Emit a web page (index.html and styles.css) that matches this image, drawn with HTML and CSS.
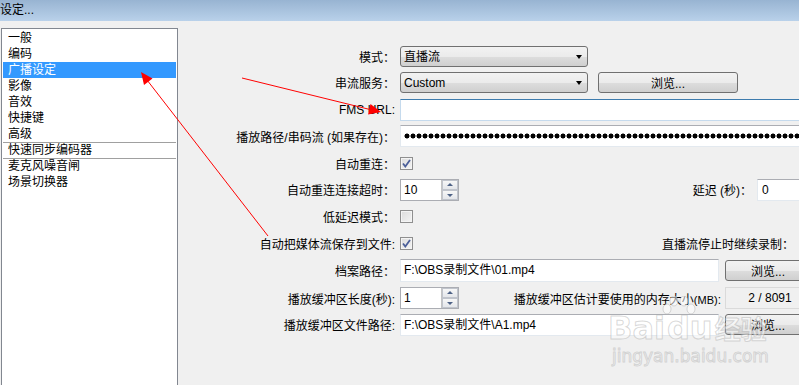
FILE: index.html
```html
<!DOCTYPE html>
<html lang="zh-CN">
<head>
  <meta charset="UTF-8">
  <title>设定...</title>
  <link rel="stylesheet" href="styles.css">
</head>
<body>
  <div class="titlebar">设定...</div>

  <div class="main">
    <ul class="nav">
      <li>一般</li>
      <li>编码</li>
      <li class="active">广播设定</li>
      <li>影像</li>
      <li>音效</li>
      <li>快捷键</li>
      <li>高级</li>
      <li class="sep">快速同步编码器</li>
      <li class="sep">麦克风噪音闸</li>
      <li>场景切换器</li>
    </ul>

    <div class="form">
      <div class="row">
        <span class="label">模式：</span>
        <div class="combo">直播流<i class="caret"></i></div>
      </div>

      <div class="row">
        <span class="label">串流服务：</span>
        <div class="combo">Custom<i class="caret"></i></div>
        <button class="btn btn-wide">浏览...</button>
      </div>

      <div class="row">
        <span class="label">FMS URL:</span>
        <div class="text text-long focus"></div>
      </div>

      <div class="row">
        <span class="label">播放路径/串码流 (如果存在)：</span>
        <div class="text text-long"><span class="dots"></span></div>
      </div>

      <div class="row">
        <span class="label">自动重连：</span>
        <span class="check checked"><svg viewBox="0 0 11 11"><path d="M2 5.5 L4.3 8.5 L9 2"/></svg></span>
      </div>

      <div class="row">
        <span class="label">自动重连连接超时：</span>
        <div class="spin">
          <span class="spin-value">10</span>
          <span class="spin-btns"><b class="up"></b><b class="down"></b></span>
        </div>
        <span class="aux aux-delay">延迟 (秒)：</span>
        <div class="text text-short">0</div>
      </div>

      <div class="row">
        <span class="label">低延迟模式：</span>
        <span class="check"></span>
      </div>

      <div class="row">
        <span class="label">自动把媒体流保存到文件:</span>
        <span class="check checked"><svg viewBox="0 0 11 11"><path d="M2 5.5 L4.3 8.5 L9 2"/></svg></span>
        <span class="aux aux-keep">直播流停止时继续录制：</span>
      </div>

      <div class="row row-tall">
        <span class="label">档案路径：</span>
        <div class="text text-path">F:\OBS录制文件\01.mp4</div>
        <button class="btn btn-side">浏览...</button>
      </div>

      <div class="row">
        <span class="label">播放缓冲区长度(秒):</span>
        <div class="spin">
          <span class="spin-value">1</span>
          <span class="spin-btns"><b class="up"></b><b class="down"></b></span>
        </div>
        <span class="aux aux-mem">播放缓冲区估计要使用的内存大小<small>(MB)</small>:</span>
        <div class="readonly">2 / 8091</div>
      </div>

      <div class="row">
        <span class="label">播放缓冲区文件路径:</span>
        <div class="text text-path">F:\OBS录制文件\A1.mp4</div>
        <button class="btn btn-side">浏览...</button>
      </div>
    </div>
  </div>

  <!-- red annotation arrows drawn over the screenshot -->
  <svg class="annot" width="799" height="385" viewBox="0 0 799 385">
    <line x1="242" y1="78" x2="372" y2="110" />
    <polygon points="381,112 368,114.5 370.5,104" />
    <line x1="268" y1="236" x2="147" y2="80" />
    <polygon points="141,72 152.5,78.5 144,85" />
  </svg>

  <div class="watermark">
    <div class="wm-logo">
      <span>Bai</span>
      <svg class="paw" width="34" height="22" viewBox="0 0 34 22">
        <ellipse cx="5" cy="13" rx="4" ry="5" />
        <ellipse cx="12" cy="5" rx="4" ry="5" />
        <ellipse cx="22" cy="5" rx="4" ry="5" />
        <ellipse cx="29" cy="13" rx="4" ry="5" />
      </svg>
      <span class="du">du</span>
      <span class="jy">经验</span>
    </div>
    <div class="wm-url">jingyan.baidu.com</div>
  </div>
</body>
</html>
```

FILE: styles.css
```css
:root {
  --panel-bg: #f0f0f0;
  --select-bg: #3399ff;
  --edit-border: #abadb3;
  --edit-side: #e3e9ef;
  --button-border: #707070;
}

body {
  margin: 0;
  width: 799px;
  height: 385px;
  overflow: hidden;
  position: relative;
  background: var(--panel-bg);
  font-family: "Liberation Sans", "Noto Sans CJK SC", sans-serif;
  font-size: 12px;
  color: #000;
}

.titlebar {
  height: 21px;
  line-height: 20px;
  background: linear-gradient(#98b4d2, #b9d1ea);
  white-space: nowrap;
}

.main {
  display: flex;
  align-items: flex-start;
}

/* left category list, cut off by the bottom of the window */
.nav {
  list-style: none;
  margin: 7px 0 0 1px;
  padding: 1px;
  width: 177px;
  height: 357px;
  box-sizing: border-box;
  border: 1px solid #828790;
  border-bottom: 0;
  background: white;
  flex: none;
}

.nav li {
  height: 16px;
  line-height: 16px;
  padding-left: 5px;
  box-sizing: border-box;
  white-space: nowrap;
}

.nav li.active {
  background: var(--select-bg);
  color: white;
}

.nav li.sep {
  border-top: 1px solid #a0a0a0;
  line-height: 15px;
}

/* settings form */
.form {
  display: flex;
  flex-direction: column;
  gap: 4.8px;
  padding-top: 24px;
  white-space: nowrap;
}

.row {
  display: flex;
  align-items: center;
  height: 22px;
}

.row-tall {
  height: 23px;
}

.label {
  width: 222px;
  padding-right: 5px;
  box-sizing: border-box;
  text-align: right;
  flex: none;
}

.combo {
  position: relative;
  width: 188px;
  height: 21px;
  line-height: 20px;
  box-sizing: border-box;
  padding-left: 3px;
  border: 1px solid var(--button-border);
  border-radius: 3px;
  background: linear-gradient(#f2f2f2, #ebebeb 50%, #dddddd 51%, #cfcfcf);
  flex: none;
}

.caret {
  position: absolute;
  right: 5px;
  top: 8px;
  border-left: 3.5px solid transparent;
  border-right: 3.5px solid transparent;
  border-top: 4px solid #000;
}

.btn {
  height: 21px;
  box-sizing: border-box;
  border: 1px solid var(--button-border);
  border-radius: 3px;
  background: linear-gradient(#f2f2f2, #ebebeb 50%, #dddddd 51%, #cfcfcf);
  font: inherit;
  color: #000;
  padding: 0;
  flex: none;
}

.btn-wide {
  width: 140px;
  margin-left: 10px;
}

.btn-side {
  width: 86px;
  margin-left: 6px;
}

.text {
  height: 22px;
  line-height: 20px;
  box-sizing: border-box;
  padding-left: 3px;
  background: white;
  border: 1px solid var(--edit-side);
  border-top-color: var(--edit-border);
  flex: none;
}

.text.focus {
  border-color: #c5daed;
  border-top-color: #3d7bad;
}

.text-long {
  width: 420px;
}

.text-short {
  width: 80px;
  padding-left: 4px;
}

.text-path {
  width: 319px;
}

.row-tall .text {
  height: 23px;
  line-height: 21px;
}

.dots {
  display: block;
  height: 6px;
  margin-top: 7px;
  background: radial-gradient(circle at 3px 3px, #000 2.2px, transparent 2.8px) 0 0 / 6px 6px repeat-x;
}

.check {
  width: 13px;
  height: 13px;
  box-sizing: border-box;
  border: 1px solid #8f8f8f;
  background: linear-gradient(135deg, #dcdcdc, #f4f4f4);
  box-shadow: inset 0 0 0 1px #f4f4f4;
  flex: none;
}

.check svg {
  display: block;
  width: 11px;
  height: 11px;
  fill: none;
  stroke: #4b5f99;
  stroke-width: 1.8;
}

.spin {
  display: flex;
  width: 59px;
  height: 22px;
  box-sizing: border-box;
  border: 1px solid var(--edit-border);
  background: white;
  flex: none;
}

.spin-value {
  flex: 1;
  line-height: 20px;
  padding-left: 3px;
}

.spin-btns {
  display: flex;
  flex-direction: column;
  width: 16px;
  border-left: 1px solid #c4c4c4;
}

.spin-btns b {
  flex: 1;
  position: relative;
  border: 1px solid #c0c4cc;
  background: linear-gradient(#f7f7f7, #e4e6ea);
}

.spin-btns b::after {
  content: "";
  position: absolute;
  left: 4px;
  border-left: 3px solid transparent;
  border-right: 3px solid transparent;
}

.spin-btns .up::after {
  top: 2px;
  border-bottom: 3px solid #4d6185;
}

.spin-btns .down::after {
  top: 3px;
  border-top: 3px solid #4d6185;
}

.aux {
  text-align: right;
  box-sizing: border-box;
  flex: none;
}

.aux-delay {
  width: 298px;
  padding-right: 5px;
}

.aux-keep {
  width: 384px;
  padding-right: 3px;
}

.aux-mem {
  width: 266px;
  padding-right: 4px;
}

.aux-mem small {
  font-size: 11px;
}

.readonly {
  width: 90px;
  height: 22px;
  line-height: 20px;
  box-sizing: border-box;
  border: 1px solid #dadada;
  text-align: center;
  flex: none;
}

/* overlays */
.annot {
  position: absolute;
  left: 0;
  top: 0;
  pointer-events: none;
}

.annot line {
  stroke: #ff0000;
  stroke-width: 1;
}

.annot polygon {
  fill: #ff0000;
}

.watermark {
  position: absolute;
  left: 608px;
  top: 296px;
  pointer-events: none;
  color: rgba(255, 255, 255, 0.55);
  -webkit-text-stroke: 1px rgba(170, 170, 170, 0.45);
}

.wm-logo {
  position: relative;
  display: flex;
  align-items: flex-end;
  height: 50px;
  font-family: "DejaVu Sans", sans-serif;
  font-weight: bold;
  font-size: 32px;
  line-height: 36px;
}

.paw {
  position: absolute;
  left: 54px;
  top: 0;
  fill: rgba(255, 255, 255, 0.55);
  stroke: rgba(170, 170, 170, 0.45);
}

.wm-logo .du {
  margin-left: 2px;
}

.wm-logo .jy {
  font-family: "Noto Sans CJK SC", sans-serif;
  font-size: 26px;
  margin-left: 2px;
}

.wm-url {
  font-family: "DejaVu Sans", sans-serif;
  font-size: 17px;
  line-height: 20px;
  margin-left: 4px;
}
```
